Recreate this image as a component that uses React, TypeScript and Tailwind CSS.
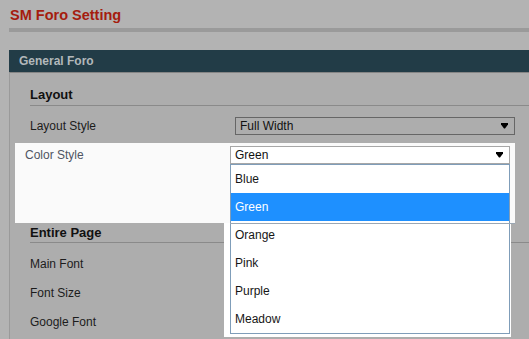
import React from "react";

function Arrow() {
  return (
    <svg width="7" height="6" viewBox="0 0 7 6" className="shrink-0">
      <path d="M0 0H7V1.6L4 5.5H3L0 1.6Z" fill="#000" />
    </svg>
  );
}

const items = ["Blue", "Green", "Orange", "Pink", "Purple", "Meadow"];

export default function App() {
  return (
    <div className="w-[529px] h-[339px] overflow-hidden bg-[#b3b3b3] flex flex-col font-['Liberation_Sans',Arial,sans-serif]">
      <div className="pl-[10px] pt-[6px] h-[28px] text-[14.5px] font-bold leading-[18px] text-[#a51c0e]">
        SM Foro Setting
      </div>
      <div className="ml-[9px] h-[4px] shrink-0 bg-[#9a9a9a]" />
      <div className="ml-[9px] mt-[18px] flex-1 flex flex-col">
        <div className="h-[22px] shrink-0 bg-[#223c47] pl-[10px] flex items-center text-[12px] font-bold text-[#b2b8bb]">
          General Foro
        </div>
        <div className="flex-1 border-l border-t border-l-[#9a9a9a] border-t-[#858585] bg-[#adadad] text-[#1c1c1c]">
          <div className="ml-[20px] pt-[14px] pb-[2px] border-b border-[#8a8a8a] text-[13px] font-bold leading-[16px] text-[#111]">
            Layout
          </div>
          <div className="mt-[11px] h-[18px] flex items-center pl-[20px] pr-[14px] text-[12px] leading-[18px]">
            <div className="flex-1">Layout Style</div>
            <div className="w-[280px] h-[18px] border border-[#666] flex items-center pl-[4px] pr-[6px]">
              <span className="flex-1 text-[#111]">Full Width</span>
              <Arrow />
            </div>
          </div>
          <div className="relative mt-[8px] ml-[5px] w-[500px] h-[80px] bg-[#fafafa]">
            <div className="pt-[3px] flex items-center pr-[5px] text-[12px] leading-[18px]">
              <div className="flex-1 pl-[10px] text-[#4f5563]">Color Style</div>
              <div className="w-[280px] h-[18px] border border-[#a7a7a7] bg-white flex items-center pl-[4px] pr-[6px]">
                <span className="flex-1 text-[#111]">Green</span>
                <Arrow />
              </div>
            </div>
            <div className="absolute left-[209px] top-[80px] w-[287px] h-[114px] bg-white" />
            <div className="absolute left-[215px] top-[21px] w-[280px] h-[170px] border border-[#7f9db9] bg-white flex flex-col">
              {items.map((it) => (
                <div
                  key={it}
                  className={
                    it === "Green"
                      ? "h-[28px] shrink-0 pl-[4px] flex items-center text-[12px] bg-[#1e90ff] text-white"
                      : "h-[28px] shrink-0 pl-[4px] flex items-center text-[12px] text-[#161616]"
                  }
                >
                  {it}
                </div>
              ))}
            </div>
            <div className="absolute left-[215px] top-[80px] w-[285px] h-[1px] bg-[#9aa7b4]" />
          </div>
          <div className="mt-[2px] ml-[20px] pb-[1px] border-b border-[#8a8a8a] text-[13px] font-bold leading-[16px] text-[#111]">
            Entire Page
          </div>
          <div className="mt-[7px] flex flex-col text-[12px] leading-[29px]">
            <div className="h-[29px] pl-[20px]">Main Font</div>
            <div className="h-[29px] pl-[20px]">Font Size</div>
            <div className="h-[29px] pl-[20px]">Google Font</div>
          </div>
        </div>
      </div>
    </div>
  );
}
